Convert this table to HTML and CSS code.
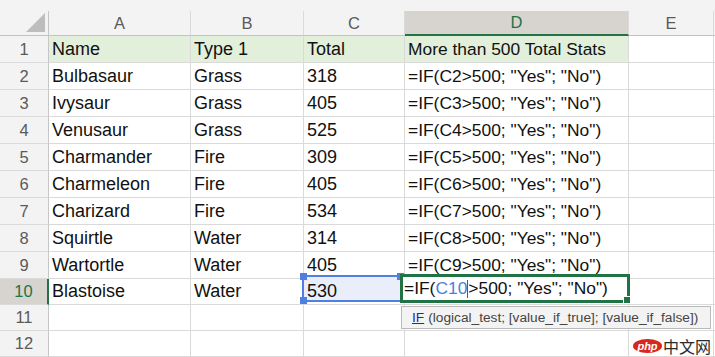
FILE: index.html
```html
<!DOCTYPE html>
<html lang="en">
<head>
    <meta charset="UTF-8">
    <title>Pokemon Stats</title>
    <link rel="stylesheet" href="styles.css">
</head>
<body>

    <div class="sheet">
        <div class="topbar"></div>

        <!-- column letters -->
        <div class="row head">
            <div class="cell corner"><span class="tri"></span></div>
            <div class="cell letter">A</div>
            <div class="cell letter">B</div>
            <div class="cell letter">C</div>
            <div class="cell letter on">D</div>
            <div class="cell letter">E</div>
            <div class="cell letter"></div>
        </div>

        <div class="row">
            <div class="cell num">1</div>
            <div class="cell hl">Name</div>
            <div class="cell hl">Type 1</div>
            <div class="cell hl">Total</div>
            <div class="cell hl wide">More than 500 Total Stats</div>
            <div class="cell"></div>
            <div class="cell"></div>
        </div>
        <div class="row">
            <div class="cell num">2</div>
            <div class="cell">Bulbasaur</div>
            <div class="cell">Grass</div>
            <div class="cell">318</div>
            <div class="cell wide">=IF(C2&gt;500; "Yes"; "No")</div>
            <div class="cell"></div>
            <div class="cell"></div>
        </div>
        <div class="row">
            <div class="cell num">3</div>
            <div class="cell">Ivysaur</div>
            <div class="cell">Grass</div>
            <div class="cell">405</div>
            <div class="cell wide">=IF(C3&gt;500; "Yes"; "No")</div>
            <div class="cell"></div>
            <div class="cell"></div>
        </div>
        <div class="row">
            <div class="cell num">4</div>
            <div class="cell">Venusaur</div>
            <div class="cell">Grass</div>
            <div class="cell">525</div>
            <div class="cell wide">=IF(C4&gt;500; "Yes"; "No")</div>
            <div class="cell"></div>
            <div class="cell"></div>
        </div>
        <div class="row">
            <div class="cell num">5</div>
            <div class="cell">Charmander</div>
            <div class="cell">Fire</div>
            <div class="cell">309</div>
            <div class="cell wide">=IF(C5&gt;500; "Yes"; "No")</div>
            <div class="cell"></div>
            <div class="cell"></div>
        </div>
        <div class="row">
            <div class="cell num">6</div>
            <div class="cell">Charmeleon</div>
            <div class="cell">Fire</div>
            <div class="cell">405</div>
            <div class="cell wide">=IF(C6&gt;500; "Yes"; "No")</div>
            <div class="cell"></div>
            <div class="cell"></div>
        </div>
        <div class="row">
            <div class="cell num">7</div>
            <div class="cell">Charizard</div>
            <div class="cell">Fire</div>
            <div class="cell">534</div>
            <div class="cell wide">=IF(C7&gt;500; "Yes"; "No")</div>
            <div class="cell"></div>
            <div class="cell"></div>
        </div>
        <div class="row">
            <div class="cell num">8</div>
            <div class="cell">Squirtle</div>
            <div class="cell">Water</div>
            <div class="cell">314</div>
            <div class="cell wide">=IF(C8&gt;500; "Yes"; "No")</div>
            <div class="cell"></div>
            <div class="cell"></div>
        </div>
        <div class="row">
            <div class="cell num">9</div>
            <div class="cell">Wartortle</div>
            <div class="cell">Water</div>
            <div class="cell">405</div>
            <div class="cell wide">=IF(C9&gt;500; "Yes"; "No")</div>
            <div class="cell"></div>
            <div class="cell"></div>
        </div>

        <!-- row being edited -->
        <div class="row short">
            <div class="cell num on">10</div>
            <div class="cell">Blastoise</div>
            <div class="cell">Water</div>
            <div class="cell">
                <div class="ref"><i class="tl"></i><i class="tr"></i><i class="bl"></i></div>
                <span class="val">530</span>
            </div>
            <div class="cell">
                <div class="edit">=IF(<span class="blue">C10</span><span class="caret"></span>&gt;500; "Yes"; "No")</div>
                <div class="hint"><u>IF</u> (logical_test; [value_if_true]; [value_if_false])</div>
            </div>
            <div class="cell"></div>
            <div class="cell"></div>
        </div>
        <div class="row short">
            <div class="cell num">11</div>
            <div class="cell"></div>
            <div class="cell"></div>
            <div class="cell"></div>
            <div class="cell"></div>
            <div class="cell"></div>
            <div class="cell"></div>
        </div>
        <div class="row short">
            <div class="cell num">12</div>
            <div class="cell"></div>
            <div class="cell"></div>
            <div class="cell"></div>
            <div class="cell"></div>
            <div class="cell"></div>
            <div class="cell"></div>
        </div>

        <div class="wm"><span class="php">php</span><span class="cn">中文网</span></div>
    </div>

</body>
</html>
```

FILE: styles.css
```css
* {
    margin: 0;
    padding: 0;
    box-sizing: border-box;
}
body {
    font-family: "Liberation Sans", Arial, sans-serif;
    background: #fff;
    color: #111;
}
.sheet {
    position: relative;
    width: 715px;
    height: 357px;
    overflow: hidden;
}
.topbar {
    height: 11px;
    background: #f3f3f3;
}
.row {
    display: grid;
    grid-template-columns: 49px 142px 113px 101px 224px 85px 1fr;
    height: 27px;
}
.row.short {
    height: 26px;
}
.row.head {
    height: 25px;
}
.cell {
    position: relative;
    display: flex;
    align-items: center;
    padding: 0 3px;
    font-size: 18px;
    white-space: nowrap;
    border-right: 1px solid #dadada;
    border-bottom: 1px solid #dadada;
}
.wide {
    font-size: 17.4px;
}
.hl {
    background: #e2efda;
}

/* headers */
.letter, .num, .corner {
    background: #f3f3f3;
    color: #5a5a5a;
    font-size: 16.5px;
    justify-content: center;
}
.head .cell {
    border-bottom-color: #c2c2c2;
}
.num, .corner {
    border-right-color: #c6c6c6;
}
.corner {
    justify-content: flex-end;
    align-items: flex-end;
    padding: 0 3px 3px 0;
}
.tri {
    width: 0;
    height: 0;
    border-left: 19px solid transparent;
    border-bottom: 19px solid #bdbdbd;
}
.letter.on {
    background: #d7d4d0;
    color: #217346;
    border-bottom: 2px solid #217346;
}
.num.on {
    background: #d7d4d0;
    color: #217346;
    border-right: 2px solid #217346;
}

/* C10 reference highlight */
.ref {
    position: absolute;
    left: -2px;
    top: -4px;
    width: 100px;
    height: 27px;
    border: 2px solid #4f7fe0;
    background: #e9eefa;
    z-index: 1;
}
.ref i {
    position: absolute;
    width: 7px;
    height: 7px;
    background: #4f7fe0;
}
.ref .tl { left: -4px; top: -4px; }
.ref .tr { right: -4px; top: -4px; }
.ref .bl { left: -4px; bottom: -4px; }
.val {
    position: relative;
    z-index: 2;
}

/* D10 edit box */
.edit {
    position: absolute;
    left: -5px;
    top: -5px;
    width: 230px;
    height: 29px;
    display: flex;
    align-items: center;
    padding-left: 1px;
    font-size: 17.4px;
    background: #fff;
    border: 3px solid #217346;
    z-index: 3;
}
.edit::after {
    content: "";
    position: absolute;
    right: -4px;
    bottom: -4px;
    width: 6px;
    height: 6px;
    background: #217346;
    border: 1px solid #fff;
}
.blue {
    color: #4a7fdc;
}
.caret {
    display: inline-block;
    width: 1px;
    height: 18px;
    background: #2f58b0;
}
.hint {
    position: absolute;
    left: -4px;
    top: 27px;
    width: 310px;
    height: 23px;
    display: flex;
    align-items: center;
    padding-left: 10px;
    font-size: 13.7px;
    color: #454545;
    background: #f3f3f3;
    border: 1px solid #b9b9b9;
    z-index: 3;
}
.hint u {
    color: #2222cc;
    margin-right: 4px;
}

/* watermark */
.wm {
    position: absolute;
    left: 633px;
    top: 338px;
    display: flex;
    align-items: center;
    z-index: 4;
}
.php {
    width: 29px;
    height: 14px;
    border-radius: 50%;
    background: #d8271c;
    color: #fff;
    font-size: 11px;
    font-style: italic;
    font-weight: bold;
    line-height: 14px;
    text-align: center;
}
.cn {
    margin-left: 1px;
    font-family: "Noto Sans CJK SC", sans-serif;
    font-size: 16px;
    line-height: 16px;
    color: #2b2b2b;
}
```
